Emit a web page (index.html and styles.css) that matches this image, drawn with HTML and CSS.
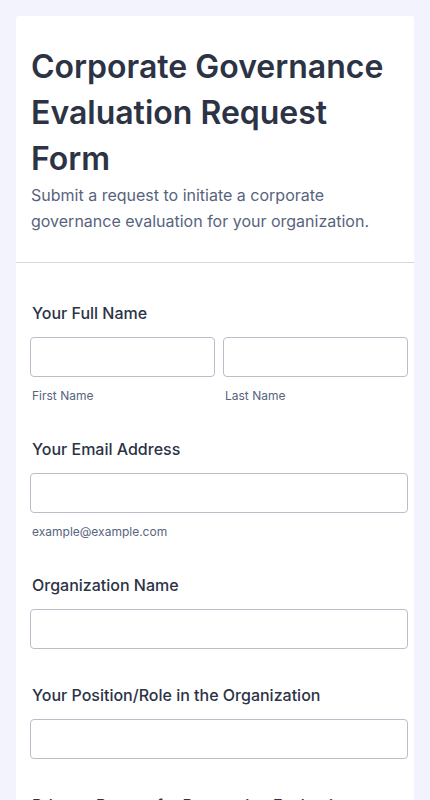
FILE: index.html
```html
<!DOCTYPE html>
<html lang="en">
<head>
    <meta charset="UTF-8">
    <meta name="viewport" content="width=device-width, initial-scale=1.0">
    <title>Corporate Governance Evaluation Request Form</title>
    <link rel="stylesheet" href="styles.css">
</head>
<body>
    <div class="form-card">
        <div class="form-header">
            <h1>Corporate Governance Evaluation Request Form</h1>
            <p class="subtitle">Submit a request to initiate a corporate governance evaluation for your organization.</p>
        </div>

        <form class="form-body">
            <div class="form-group">
                <label class="field-label">Your Full Name</label>
                <div class="name-row">
                    <div class="name-col">
                        <input type="text" id="first_name">
                        <span class="sublabel">First Name</span>
                    </div>
                    <div class="name-col">
                        <input type="text" id="last_name">
                        <span class="sublabel">Last Name</span>
                    </div>
                </div>
            </div>

            <div class="form-group">
                <label class="field-label" for="email">Your Email Address</label>
                <input type="email" id="email">
                <span class="sublabel">example@example.com</span>
            </div>

            <div class="form-group">
                <label class="field-label" for="org">Organization Name</label>
                <input type="text" id="org">
            </div>

            <div class="form-group">
                <label class="field-label" for="role">Your Position/Role in the Organization</label>
                <input type="text" id="role">
            </div>

            <div class="form-group">
                <label class="field-label" for="reason">Primary Reason for Requesting Evaluation</label>
                <textarea id="reason" rows="4"></textarea>
            </div>
        </form>
    </div>
</body>
</html>
```

FILE: styles.css
```css
body {
    font-family: Inter, "Noto Sans", sans-serif;
    margin: 0;
    padding: 16px 16px 0;
    background-color: #f3f3fe;
    color: #2c3345;
}
.form-card {
    background-color: #fff;
    border-radius: 3px;
}
.form-header {
    padding: 28px 14px 28px 14px;
    border-bottom: 1px solid #d8d8e0;
}
h1 {
    margin: 0;
    font-size: 32px;
    line-height: 46px;
    font-weight: 600;
    color: #2c3345;
    padding-left: 1px;
}
.subtitle {
    margin: 0;
    font-size: 16px;
    line-height: 26px;
    color: #57647e;
    padding-left: 1px;
}
.form-body {
    padding: 40px 6px 0 14px;
}
.form-group {
    display: flex;
    flex-direction: column;
    margin-bottom: 36px;
}
.field-label {
    font-size: 16px;
    line-height: 20px;
    font-weight: 500;
    margin: 0 0 14px 2px;
}
.name-row {
    display: flex;
    gap: 8px;
}
.name-col {
    flex: 1;
    display: flex;
    flex-direction: column;
}
input, textarea {
    box-sizing: border-box;
    width: 100%;
    height: 40px;
    border: 1px solid #b8bdc9;
    border-radius: 4px;
    font-family: inherit;
    font-size: 15px;
    padding: 0 10px;
    margin: 0;
}
textarea {
    height: 160px;
}
.sublabel {
    font-size: 12px;
    line-height: 16px;
    color: #57647e;
    margin: 11px 0 -1px 2px;
}
```
